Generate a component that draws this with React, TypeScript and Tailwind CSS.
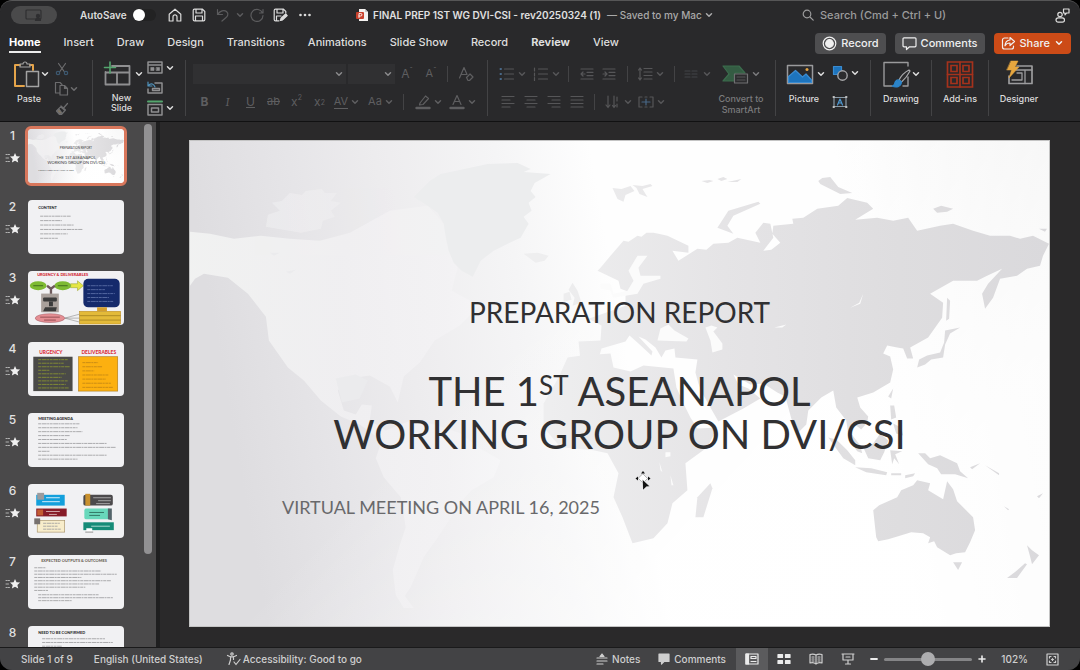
import { useState, type ReactNode } from "react";
import { clsx } from "clsx";

type IconProps = {
  w?: number;
  h?: number;
  className?: string;
  children: ReactNode;
};

const Icon = ({ w = 16, h = 16, className, children }: IconProps) => (
  <svg
    width={w}
    height={h}
    viewBox={`0 0 ${w} ${h}`}
    fill="none"
    stroke="currentColor"
    strokeWidth={1.2}
    strokeLinecap="round"
    strokeLinejoin="round"
    className={clsx("shrink-0", className)}
    aria-hidden="true"
  >
    {children}
  </svg>
);

const Chevron = ({ className }: { className?: string }) => (
  <Icon w={10} h={8} className={className}>
    <path d="M2.5 2.8 5 5.2l2.5-2.4" strokeWidth={1.5} />
  </Icon>
);

// Small icon button, width comes from className
const Tool = ({ label, className, children }: { label: string; className?: string; children: ReactNode }) => (
  <button type="button" aria-label={label} className={clsx("flex h-5 shrink-0 items-center justify-center", className)}>
    {children}
  </button>
);

const Separator = ({ className }: { className?: string }) => (
  <span className={clsx("h-4 w-px shrink-0 bg-[#434345]", className)} />
);

/* ---------- World map used as the slide background ---------- */

const WorldMap = ({ id }: { id: string }) => (
  <svg viewBox="0 0 860 486" preserveAspectRatio="none" className="absolute inset-0 h-full w-full" aria-hidden="true">
    <defs>
      <linearGradient id={`${id}-sea`} x1="0" y1="0.1" x2="1" y2="0">
        <stop offset="0" stopColor="#dedde0" />
        <stop offset="0.12" stopColor="#e6e5e8" />
        <stop offset="0.22" stopColor="#edecee" />
        <stop offset="0.36" stopColor="#f5f5f6" />
        <stop offset="0.47" stopColor="#fefefe" />
        <stop offset="0.75" stopColor="#fefefe" />
        <stop offset="1" stopColor="#f0f0f0" />
      </linearGradient>
      <linearGradient id={`${id}-west`} gradientUnits="userSpaceOnUse" x1="0" y1="0" x2="340" y2="0">
        <stop offset="0" stopColor="#f4f5f4" />
        <stop offset="0.45" stopColor="#f1f0f2" />
        <stop offset="0.75" stopColor="#f3f2f4" />
        <stop offset="1" stopColor="#f9f9fa" />
      </linearGradient>
      <linearGradient id={`${id}-east`} gradientUnits="userSpaceOnUse" x1="360" y1="0" x2="860" y2="0">
        <stop offset="0" stopColor="#eeeeef" />
        <stop offset="0.35" stopColor="#e5e4e6" />
        <stop offset="0.7" stopColor="#dedddf" />
        <stop offset="1" stopColor="#dad9dc" />
      </linearGradient>
      <linearGradient id={`${id}-glow`} gradientUnits="userSpaceOnUse" x1="420" y1="80" x2="860" y2="486">
        <stop offset="0" stopColor="#ffffff" stopOpacity="0" />
        <stop offset="0.7" stopColor="#ffffff" stopOpacity="0.8" />
      </linearGradient>
    </defs>
    <rect width="860" height="486" fill={`url(#${id}-sea)`} />
    <rect width="860" height="486" fill={`url(#${id}-glow)`} />

    {/* Americas */}
    <g fill={`url(#${id}-west)`} opacity="0.85">
      <path d="M0 91 20 93 44 98 71 95 100 98 130 100 160 92 200 70 238 65 254 83 259 110 268 127 262 150 290 165 270 185 245 200 230 222 214 236 208 262 200 246 180 235 160 238 148 250 154 270 166 274 172 264 182 265 180 280 196 290 221 280 245 284 271 293 290 308 311 320 304 337 282 350 271 362 251 393 234 417 221 447 215 456 224 468 214 468 206 455 203 430 210 405 216 387 211 357 194 337 186 318 192 300 170 284 151 276 131 260 114 240 98 227 79 200 76 176 58 153 38 137 14 133 5 138 0 145z" />
      <path d="m76 86 2-12 12-4-8-8 10-2 8-8 12 2 4-4 16-2 3 4 12 0-6 8 10 2-10 8 4 6-12 4-2 8-20 4z" opacity="0.6" />
    </g>
    <path
      d="M238 65 224 56 240 40 251 33 270 29 298 23 328 22 341 28 334 31 361 33 345 42 341 50 346 56 339 62 342 70 334 76 339 83 331 97 318 103 304 110 291 120 283 136 272 130 264 122 259 110 256 96 254 83 248 72z"
      fill="#ecedee"
    />

    {/* Europe and Asia */}
    <g fill={`url(#${id}-east)`}>
      <path d="m408 130 3-3 10-12 13-15 5 1 9-6 4 1 5-4 7 0 5 1 9 2 21 10v7l-16-2 6 10 19-12 9 1 7-6 15-1 9-5 23 5-5-10 8-10 7 1 3 14-10 13 8-1 9-7-8-9 1-8 20-2-1-5 11-1 14-9 21-3 9-8 20 5 6 6-18 11 22-2 16 3 15-3 9 13 23-5 13-2 20 7 17 5h20l10 3 13-3 16 8-6 12-3 10-13 3-10 7-17 3-7 19-8 11-3-15 6-10 14-15-15 7-10 5h-24l-23 13 13 9-1 15-14 20-18 10 3 11-6 0-4-10-6-1-10-2-4 8 7 3 3 13-3 13-17 10-16 5 3 10 8 9-1 6-6 7-9-7-2 10 10 13 2 8-5-2-8-11-3-20-10-13-3-17-12 7-13 13-2 14-8 8-7-14-6-22-8-4-14-9-13 1-17-10 5 10 10 4 12 10-17 10-25 13-8-14-9-16-3-8-3-11 2-13-22-2-1-9-9 2-4 7-6-10-10-8-7-3 14 15-1 4-13-12-9-8-4 6-24 7-3 10-18 3-2-20 22-1 1-15-13-7 20-7 17-6v-10l3-4-8-3-2-8z" />
      <path d="m383 142 5 8 4 12-9 3 2-8-6-8zM374 153l6-2 2 8-8 2zM334 113l14-1 11 3-4 5-9 2z" />
      <path d="m528 87 11-17 30-9 2 2-27 12-6 10 6 8zM423 47l9 1 9-3 4 5-9 4-2 7-6-3zM443 44l10 1 8-2 2 2-10 3 5 8-8-3-3-6zM512 40l8-1 4 1-6 2zM528 38l6-2 4 2-6 2zM538 41l14-3-4 3zM629 40l4-3 8-1 8 10 14 6-12 1-20-10zM744 68l8-3 12 3-6 3-10 1zM850 88l8 0-2 3z" />
      <path d="m728 227 2-8 8-4 13-3 4-10 1-12 15-3-10 6-5 11-2 13-12 2-6 5zM758 157l3 3-1 18-3 2zM704 248l-2 10-3-2z" />
      <path d="m701 265 4 0 2 12-5 2zM704 283l8 4 2 8-7-2zM639 297l8 2 11 11 8 10v5l-12-7zM666 327l16 1 16 4-1 3-20-3zM674 307l10-4 7-10 8 7-4 12-4 8-12-2zM701 310l12 1-7 3 4 10-5-6-2 6zM702 333l10 0 0 2-10 0zM716 335l10-2-2 3-8 2zM729 313l7 0 5 5 10-3 17 8 3 8 8 7-13-4-14 0-4-6-9-4zM781 327l10-4-8 6zM796 325l14 8 0 2zM815 366l5 3-1 1zM848 356l6-3-4 5z" />
      <path d="m684 370 6-5 18-8 4-7 12-5 4-5 13 3-2 7 15 9 4-18 6 8 4 12 16 16 2 13-5 12-5 10-9 1-6 2-13-8-3-6-6 2 2-6-7-4-12-1-13 4-10 3-10 2-2-4zM764 422l9 0-4 8zM838 405l5 5 7 5-7 9-2-8zM836 423l2 1-10 14-10 0 8-6z" />
    </g>

    {/* Africa */}
    <g fill={`url(#${id}-east)`}>
      <path d="m378 217 14-2 29-2 3 14 17 4 13-6 30 3 3 19 9 20 5 10 7 11 20-1-10 20-22 16 2 27-15 13-5 20-14 15-21 5-10-26-9-20 5-24-11-20-14-3-33-3-17-20v-24l15-26z" />
      <path d="m521 343 2 5-9 29-8 0 2-20z" />
    </g>

    {/* Inland seas and lakes */}
    <g fill="#fbfbfb">
      <path d="M411 143h10l3 10 14-3 6-10-5-10 9-15h10l-9 12 2 8h20v3l-17 5-6 10-24 4-3-7-10-2z" />
      <path d="m471 188 8-4 6 6 14 8-2 3-29-1zM516 187l6-2 6 2-4 4 9 12 0 6-10 3-2-12zM585 187l12-3-4 3zM476 312l5 0 0 4-5 1zM470 322l3 10-2-2zM481 335l3 10-2 0z" />
      <path d="m661 167 9-5 4-9-3 10z" />
    </g>
    <path d="M146 238l20-4 12 6-8 18-18 4zM80 112l10 0-6 3zM96 131l10-2-6 4z" fill="#ebebed" />
  </svg>
);

/* ---------- Slide thumbnails ---------- */

type RuledLinesProps = { x: number; y: number; step: number; widths: number[]; color?: string };

const RuledLines = ({ x, y, step, widths, color = "#98989a" }: RuledLinesProps) => (
  <g stroke={color} strokeWidth={0.8}>
    {widths.map((w, i) => (
      <path key={i} d={`M${x} ${y + i * step}h${w}`} strokeDasharray="3 0.6 5 0.5 2 0.6" />
    ))}
  </g>
);

const heading = "font-[Lato] font-black";

const thumbnails: { n: number; title: string; art: ReactNode }[] = [
  {
    n: 2,
    title: "Content",
    art: (
      <>
        <text x="10" y="9" fontSize="4" fill="#2e2e30" className={heading}>CONTENT</text>
        <RuledLines x={12} y={16.5} step={4.5} widths={[31, 22, 34, 43, 28, 18]} />
      </>
    ),
  },
  {
    n: 3,
    title: "Urgency & Deliverables",
    art: (
      <>
        <text x="9" y="5.5" fontSize="4" fill="#d2232f" className={heading}>URGENCY &amp; DELIVERABLES</text>
        <path d="M43 13h7v-3l6 5-6 5v-3h-7z" fill="#e5e645" stroke="#8c9a2c" strokeWidth=".5" />
        <ellipse cx="10" cy="15" rx="8.5" ry="4.5" fill="#7dba32" />
        <ellipse cx="35" cy="15" rx="8.5" ry="4.5" fill="#7dba32" />
        <path d="M19 15l4 3 4-3M23 18v6" stroke="#6e5a5c" strokeWidth="2.4" fill="none" />
        <rect x="13" y="23" width="18" height="19" fill="#a9a09b" />
        <rect x="15" y="27" width="14" height="4" rx="1" fill="#3b3b3b" />
        <path d="M17 37h12l-1 4H15zM21 31h4v5h-4z" fill="#3b3b3b" />
        <rect x="56" y="8" width="37" height="29" rx="5" fill="#152a6b" />
        <RuledLines x={60} y={15} step={4} widths={[26, 18, 28, 22, 27]} color="#6476ad" />
        <path d="M70 37h10v4H70z" fill="#d59f2c" />
        <rect x="52" y="41" width="42" height="13" fill="#e3ba39" stroke="#b78622" strokeWidth=".5" />
        <path d="M52 45.5h42M52 50h42" stroke="#97761d" strokeWidth=".7" />
        <path d="m37 48 15-4M37 48h15M37 48l15 4" stroke="#777" strokeWidth=".5" />
        <ellipse cx="22" cy="48" rx="15" ry="4.5" fill="#e58e93" stroke="#9c5960" strokeWidth=".5" />
        <path d="M12 47h20M16 50h12" stroke="#7f3f45" strokeWidth=".8" />
        <path d="M5 15h10M30 15h10" stroke="#33591a" strokeWidth=".8" />
      </>
    ),
  },
  {
    n: 4,
    title: "Urgency and Deliverables",
    art: (
      <>
        <text x="11" y="12" fontSize="5" fill="#dc2f3b" className={heading}>URGENCY</text>
        <text x="54" y="12" fontSize="5" fill="#dc2f3b" className={heading}>DELIVERABLES</text>
        <rect x="5" y="15" width="40" height="35" fill="#4a4a48" />
        <RuledLines x={10} y={18} step={3.6} widths={[30, 26, 32, 12, 28, 24, 30, 28, 31]} color="#8f9a30" />
        <rect x="51" y="15" width="40" height="35" fill="#fcb010" stroke="#a8781c" strokeWidth=".6" />
        <RuledLines x={55} y={21} step={4.2} widths={[16, 20, 12, 27, 24, 29, 31]} color="#bf8516" />
      </>
    ),
  },
  {
    n: 5,
    title: "Meeting Agenda",
    art: (
      <>
        <text x="10" y="7.5" fontSize="4" fill="#2e2e30" className={heading}>MEETING AGENDA</text>
        <RuledLines x={10} y={11} step={4} widths={[42, 40, 45, 32, 29, 70, 79, 12, 70, 40]} />
      </>
    ),
  },
  {
    n: 6,
    title: "Overview",
    art: (
      <>
        <rect x="8" y="11" width="29" height="11" fill="#14a0dc" />
        <rect x="9" y="9" width="7" height="7" fill="#9b9b9d" />
        <path d="M18 14h14M14 18h18" stroke="#d5eefa" />
        <rect x="8" y="25" width="31" height="8" fill="#871c28" />
        <rect x="9" y="26" width="6" height="6" fill="#c25b31" />
        <path d="M18 28h14M21 31h8" stroke="#dab5b8" strokeWidth=".9" />
        <rect x="9" y="37" width="28" height="12" fill="#f8edcb" stroke="#a08a60" strokeWidth=".6" />
        <rect x="6" y="35" width="6" height="6" fill="#77716e" />
        <RuledLines x={15} y={40} step={3} widths={[17, 15, 18]} />
        <rect x="56" y="11" width="30" height="11" rx="2" fill="#4c4a4c" />
        <rect x="58" y="10" width="5" height="12" fill="#c9912e" />
        <path d="M66 14h18M71 17h13M69 20h14" stroke="#bbb" strokeWidth=".8" />
        <rect x="57" y="25" width="27" height="11" rx="2" fill="#68d8bb" />
        <path d="M62 29h15M62 32h11" stroke="#2c6c5c" strokeWidth=".9" />
        <path d="M81 25h4v12l-4-1z" fill="#53646a" />
        <rect x="56" y="39" width="31" height="8" fill="#158b77" />
        <path d="M64 43h19" stroke="#b9e2da" strokeWidth=".9" />
        <path d="M59 45h6v5h-6z" fill="#fff" />
        <path d="M58 49h8" stroke="#898989" />
      </>
    ),
  },
  {
    n: 7,
    title: "Expected Outputs & Outcomes",
    art: (
      <>
        <text x="13" y="7" fontSize="4" fill="#6a6255" className={heading}>EXPECTED OUTPUTS &amp; OUTCOMES</text>
        <RuledLines x={6} y={13} step={3.3} widths={[12, 68, 84, 48, 78, 66, 52, 14]} />
        <RuledLines x={10} y={40.5} step={3} widths={[62, 76, 34]} />
      </>
    ),
  },
  {
    n: 8,
    title: "Need to be Confirmed",
    art: (
      <>
        <text x="10" y="8" fontSize="4" fill="#2e2e30" className={heading}>NEED TO BE CONFIRMED</text>
        <RuledLines x={14} y={13} step={3.8} widths={[64, 72, 20, 68]} />
      </>
    ),
  },
];

const Star = () => (
  <Icon w={16} h={12} className="text-[#f0f0f0]">
    <path d="M1 2.5h1M3 2.5h1.5M1 6h2.5M1 9.5h1M3 9.5h1.5" strokeWidth={0.9} opacity={0.7} />
    <path d="m10 1 1.5 3.3 3.6.3-2.7 2.4.8 3.6L10 8.7l-3.1 1.9.8-3.6L5 4.6l3.6-.3z" fill="currentColor" stroke="none" />
  </Icon>
);

type ThumbProps = { n: number; title: string; active?: boolean; onSelect: () => void; children: ReactNode };

const Thumb = ({ n, title, active, onSelect, children }: ThumbProps) => (
  <li className="flex h-[71px] shrink-0 items-start">
    <div className="flex w-[25px] shrink-0 flex-col items-center gap-2 pt-0.5 text-[12px] leading-4 font-medium text-[#e2e2e2]">
      <span>{n}</span>
      <Star />
    </div>
    <button
      type="button"
      aria-label={`Slide ${n}: ${title}`}
      onClick={onSelect}
      className={clsx("rounded-md border-2 p-px", active ? "border-[#d8775c] bg-[#d8775c]" : "border-transparent")}
    >
      <span className="relative block h-[54px] w-[96px] overflow-hidden rounded-sm bg-[#f1f1f3]">{children}</span>
    </button>
  </li>
);

const SlideList = ({ current, onSelect }: { current: number; onSelect: (n: number) => void }) => (
  <aside className="flex w-[156px] shrink-0 overflow-hidden bg-[#4a494a]">
    <ol className="flex flex-1 flex-col pt-1">
      <Thumb n={1} title="Preparation Report" active={current === 1} onSelect={() => onSelect(1)}>
        <WorldMap id="thumb" />
        <svg viewBox="0 0 96 54" className="absolute inset-0" textAnchor="middle" fill="#3b3b3d" aria-hidden="true">
          <text x="48" y="20" fontSize="3" className="font-[Lato]">PREPARATION REPORT</text>
          <text x="48" y="30" fontSize="4" className="font-[Lato]">THE 1ST ASEANAPOL</text>
          <text x="48" y="35" fontSize="4" className="font-[Lato]">WORKING GROUP ON DVI/CSI</text>
          <text x="28" y="42" fontSize="2" className="font-[Lato]">VIRTUAL MEETING ON APRIL 16, 2025</text>
        </svg>
      </Thumb>
      {thumbnails.map((t) => (
        <Thumb key={t.n} n={t.n} title={t.title} active={current === t.n} onSelect={() => onSelect(t.n)}>
          <svg viewBox="0 0 97 55" className="block h-full w-full" aria-hidden="true">
            {t.art}
          </svg>
        </Thumb>
      ))}
    </ol>
    <div className="w-3 shrink-0 pt-0.5">
      <div className="h-[430px] w-2 rounded-full bg-[#929193]" />
    </div>
  </aside>
);

/* ---------- Title bar and tabs ---------- */

const TitleBar = () => (
  <header className="flex h-[28px] shrink-0 items-center text-[11px] text-[#dcdcdc]">
    <div className="flex w-[356px] shrink-0 items-center">
      <div className="ml-[11px] flex h-[18px] w-[46px] items-center justify-center rounded-full bg-[#4a4a4b] text-[#2f2f31]">
        <Icon w={18} h={12}>
          <rect x="1" y="1" width="15" height="9" rx="1" />
          <circle cx="13" cy="7" r="1.6" fill="currentColor" />
          <path d="M10.5 11.5c0-3 5-3 5 0z" fill="currentColor" />
        </Icon>
      </div>
      <label className="ml-[23px] flex items-center gap-1.5 text-[10px] font-semibold">
        AutoSave
        <input
          type="checkbox"
          role="switch"
          className="h-3 w-[23px] appearance-none rounded-full bg-[#222223] before:block before:h-3 before:w-3 before:rounded-full before:bg-white checked:before:ml-auto"
        />
      </label>
      <div className="ml-[7px] flex items-center">
        <Tool label="Home" className="w-6">
          <Icon w={14} h={14}>
            <path d="M1.2 6.2 7 1.2l5.8 5V13H9V8.8a2 2 0 0 0-4 0V13H1.2z" />
          </Icon>
        </Tool>
        <Tool label="Save" className="w-6">
          <Icon w={14} h={14}>
            <path d="M1.2 2.5c0-.8.5-1.3 1.3-1.3h8l2.3 2.3v8c0 .8-.5 1.3-1.3 1.3h-9c-.8 0-1.3-.5-1.3-1.3zM4 1.5V5h6V1.5M3.5 12.5V8h7v4.5" />
          </Icon>
        </Tool>
        <Tool label="Undo" className="w-6 text-[#5b5b5d]">
          <Icon w={14} h={14}>
            <path d="M1.5 1.5v5h5M1.8 6.2C4 3 8 1.5 10.5 3.5c2.7 2.4 1 5-1 6.5L6 13" />
          </Icon>
        </Tool>
        <Chevron className="text-[#5b5b5d]" />
        <Tool label="Redo" className="w-6 text-[#5b5b5d]">
          <Icon w={14} h={14}>
            <path d="M12.5 5A6 6 0 1 0 13 7.5M13 1.5V5H9.5" />
          </Icon>
        </Tool>
        <Tool label="Save as" className="w-6">
          <Icon w={15} h={14}>
            <path d="M6 12.8H2.5c-.8 0-1.3-.5-1.3-1.3v-9c0-.8.5-1.3 1.3-1.3h8l2.3 2.3V5M4 1.5V5h6V1.5M3.5 12.5V8H8" />
            <path d="m7.5 12.5.6-2.2 4.6-4.3 1.5 1.6-4.6 4.3z" fill="currentColor" />
          </Icon>
        </Tool>
        <Tool label="More" className="w-6">
          <Icon w={14} h={4}>
            <g fill="currentColor" stroke="none">
              <circle cx="2.5" cy="2" r="1.3" />
              <circle cx="7" cy="2" r="1.3" />
              <circle cx="11.5" cy="2" r="1.3" />
            </g>
          </Icon>
        </Tool>
      </div>
    </div>
    <button type="button" className="flex w-[446px] shrink-0 items-center text-left text-[10px] text-[#a9a9aa]">
      <Icon w={13} h={14} className="mr-1">
        <path d="M3 1h6l3 3v9H3z" fill="#f3f1f0" stroke="none" />
        <path d="M9 1v3h3z" fill="#c9c5c4" stroke="none" />
        <rect x="0" y="4" width="8" height="7" rx="1" fill="#c8402c" stroke="none" />
        <path d="M3 9.5v-4h1.7a1.2 1.2 0 0 1 0 2.5H3" stroke="#fff" strokeWidth=".9" />
      </Icon>
      <span className="font-semibold text-[#e0e0e0]">FINAL PREP 1ST WG DVI-CSI - rev20250324 (1)</span>
      <span className="ml-1.5 font-medium">— Saved to my Mac</span>
      <Chevron className="ml-0.5" />
    </button>
    <label className="flex min-w-0 flex-1 items-center gap-1.5 text-[#9b9b9c]">
      <Icon w={12} h={12}>
        <circle cx="5" cy="5" r="3.8" />
        <path d="m8 8 3.2 3.2" />
      </Icon>
      <input
        type="search"
        aria-label="Search"
        placeholder="Search (Cmd + Ctrl + U)"
        className="min-w-0 flex-1 bg-transparent text-[11px] font-medium outline-none placeholder:text-[#9b9b9c]"
      />
    </label>
    <Tool label="Presence" className="mr-2.5 w-4">
      <Icon w={15} h={15}>
        <circle cx="5" cy="6.5" r="2.2" />
        <rect x="1" y="9.8" width="8.5" height="4.4" rx="2.2" />
        <path d="M8.5 1H14v4h-2.5L10 6.8V5H8.5z" />
      </Icon>
    </Tool>
  </header>
);

const tabs = ["Home", "Insert", "Draw", "Design", "Transitions", "Animations", "Slide Show", "Record", "Review", "View"];

const TabRow = ({ tab, onSelect }: { tab: string; onSelect: (name: string) => void }) => (
  <div className="flex h-[28px] shrink-0 items-center px-[9px]">
    <nav className="flex flex-1 items-center gap-[23px] text-[11px] font-medium text-[#dedede]">
      {tabs.map((name) => (
        <button
          key={name}
          type="button"
          onClick={() => onSelect(name)}
          className={clsx(
            "border-b-2 pt-px pb-px leading-4 whitespace-nowrap",
            name === tab ? "border-[#ececec] font-bold text-white" : "border-transparent",
            name === "Review" && "font-bold"
          )}
        >
          {name}
        </button>
      ))}
    </nav>
    <div className="flex items-center gap-[9px] text-[11px] font-medium text-[#f0f0f0]">
      <button type="button" className="flex h-[21px] items-center gap-1 rounded bg-[#4e4e50] px-[7px]">
        <Icon w={15} h={15}>
          <circle cx="7.5" cy="7.5" r="6.3" />
          <circle cx="7.5" cy="7.5" r="3.8" fill="currentColor" />
        </Icon>
        Record
      </button>
      <button type="button" className="flex h-[21px] items-center gap-1 rounded bg-[#4e4e50] px-[7px]">
        <Icon w={15} h={15}>
          <path d="M2 1.8h11c.5 0 1 .4 1 1v7c0 .6-.5 1-1 1H7.5l-3 2.7v-2.7H2c-.5 0-1-.4-1-1v-7c0-.6.5-1 1-1z" />
        </Icon>
        Comments
      </button>
      <button type="button" className="flex h-[21px] items-center gap-1 rounded bg-[#cc4b17] px-[7px]">
        <Icon w={15} h={15}>
          <path d="M7 2H3.5c-1 0-2 1-2 2v7c0 1 1 2 2 2h7c1 0 2-1 2-2v-1M9 1.5l4.5 4-4.5 4V7C6.5 7 5 8 4 9.8 4.2 6.5 6 4.2 9 4z" />
        </Icon>
        Share
        <Chevron />
      </button>
    </div>
  </div>
);

/* ---------- Ribbon ---------- */

const Group = ({ className, last, children }: { className: string; last?: boolean; children: ReactNode }) => (
  <section className={clsx("flex h-[56px] shrink-0", !last && "border-r border-[#434345]", className)}>{children}</section>
);

const BigLabel = ({ className, children }: { className?: string; children: ReactNode }) => (
  <span className={clsx("block text-center text-[9px] leading-[11px] font-medium", className)}>{children}</span>
);

const AlignIcon = ({ rows }: { rows: [number, number][] }) => (
  <Icon w={14} h={14}>
    {rows.map(([x, w], i) => (
      <path key={i} d={`M${x} ${1.5 + i * 3.5}h${w}`} />
    ))}
  </Icon>
);

const ClipboardGroup = () => (
  <Group className="w-[93px] pl-3">
    <button type="button" className="flex flex-col items-center gap-1">
      <span className="flex items-center">
        <Icon w={28} h={29}>
          <path d="M8 5H3v21h9M18 5h3v5" stroke="#e5a44a" strokeWidth={2} />
          <path d="M8 7V4h3a2 2 0 0 1 4 0h3v3z" stroke="#a3a3a3" />
          <path d="M14.5 11.5h12v15h-12z" fill="#2c2c2e" stroke="#a3a3a3" strokeWidth={1.5} />
        </Icon>
        <Chevron className="text-[#dcdcdc]" />
      </span>
      <BigLabel className="mr-1">Paste</BigLabel>
    </button>
    <div className="-mt-px ml-1 flex flex-col text-[#6c6c6e]">
      <Tool label="Cut" className="w-4">
        <Icon w={14} h={14}>
          <path d="m3.5 1.5 6 8.5M10.5 1.5l-6 8.5" />
          <circle cx="3" cy="11" r="1.7" stroke="#3c5870" />
          <circle cx="11" cy="11" r="1.7" stroke="#3c5870" />
        </Icon>
      </Tool>
      <Tool label="Copy" className="w-6">
        <Icon w={15} h={15}>
          <path d="M6 12H1.5V1.5H6l2 2M6 4.5h4.5l3 3V14H6zM10.5 4.5v3h3" />
        </Icon>
        <Chevron />
      </Tool>
      <Tool label="Format painter" className="w-4">
        <Icon w={14} h={14}>
          <path d="M12.5 1.5 9 5.5M6 4l4.5 4M5.5 4.8 1.5 9l3 3.5h2L10 8.5z" />
          <path d="m4 7-2 2 3 3 2-1z" fill="#7f7462" />
        </Icon>
      </Tool>
    </div>
  </Group>
);

const SlidesGroup = () => (
  <Group className="w-[93px] pl-2.5 text-[#8f8f91]">
    <button type="button" className="flex w-[40px] flex-col gap-1">
      <span className="flex items-center">
        <Icon w={29} h={29}>
          <path d="M9 6h17.5v18.5h-24V12M3 12.5h23M14 12.5v12" strokeWidth={1.8} />
          <path d="M7 2v11M1.5 7.5h11" stroke="#54a66e" strokeWidth={1.6} />
        </Icon>
        <Chevron className="ml-0.5 text-[#dcdcdc]" />
      </span>
      <span className="w-[37px] text-center text-[9px] leading-[10px] font-medium text-[#dcdcdc]">New Slide</span>
    </button>
    <div className="-mt-0.5 ml-1 flex flex-col">
      <Tool label="Layout" className="gap-0.5">
        <Icon w={16} h={13}>
          <path d="M1 1h14v11H1zM1 4h14" strokeWidth={1.5} />
          <path d="M4 6.5h3v3H4zM9.5 6.5h3v3h-3z" fill="currentColor" strokeWidth={0.6} />
        </Icon>
        <Chevron className="text-[#dcdcdc]" />
      </Tool>
      <Tool label="Reset" className="w-4">
        <Icon w={16} h={13}>
          <path d="M8 2h7v10H1V8" strokeWidth={1.5} />
          <path d="M5.5 7.5h7v2h-7z" strokeWidth={1.4} />
          <path d="M1 1v4h4M1.5 4.5C4 1.5 7 3 8 6" stroke="#5093bd" />
        </Icon>
      </Tool>
      <Tool label="Section" className="gap-0.5">
        <Icon w={16} h={16}>
          <path d="M1 1.5h14" stroke="#54a66e" strokeWidth={2} />
          <path d="M1 4.5h14V15H1zM4.5 8h7v4h-7z" strokeWidth={1.5} />
        </Icon>
        <Chevron className="text-[#dcdcdc]" />
      </Tool>
    </div>
  </Group>
);

const FontGroup = () => (
  <Group className="w-[302px] flex-col justify-between pt-1 pb-1 pl-[7px] text-[12px] text-[#5e5e60]">
    <div className="flex items-center">
      <select aria-label="Font" className="h-5 w-[153px] appearance-none bg-[#303032] outline-none" />
      <Chevron className="-ml-3 text-[#8a8a8c]" />
      <select aria-label="Font size" className="ml-1 h-5 w-[47px] appearance-none bg-[#303032] outline-none" />
      <Chevron className="-ml-3 text-[#8a8a8c]" />
      <Tool label="Increase font size" className="ml-1 w-5">
        A<sup className="text-[8px]">ˆ</sup>
      </Tool>
      <Tool label="Decrease font size" className="ml-1 w-5 text-[11px]">
        A<sup className="text-[8px]">ˇ</sup>
      </Tool>
      <Separator className="ml-1.5" />
      <Tool label="Clear formatting" className="ml-2 w-5">
        <Icon w={16} h={16}>
          <path d="M1.5 12 6 1.5l3 7M3.2 8.5h5M8.5 11.5 12 8l3 3-3.5 3.5H10z" />
        </Icon>
      </Tool>
    </div>
    <div className="flex items-center">
      <Tool label="Bold" className="w-[23px] font-bold">B</Tool>
      <Tool label="Italic" className="w-[23px] font-serif italic">I</Tool>
      <Tool label="Underline" className="w-[23px] underline">U</Tool>
      <Tool label="Strikethrough" className="w-[23px] text-[11px] line-through">ab</Tool>
      <Tool label="Superscript" className="w-[23px]">x<sup className="text-[7px]">2</sup></Tool>
      <Tool label="Subscript" className="w-[23px]">x<sub className="text-[7px]">2</sub></Tool>
      <Tool label="Character spacing" className="w-[32px]">
        <span className="border-b border-current text-[11px] leading-[13px]">AV</span>
        <Chevron className="ml-0.5" />
      </Tool>
      <Tool label="Change case" className="ml-0.5 w-[32px] text-[11px]">
        Aa
        <Chevron className="ml-0.5" />
      </Tool>
      <Separator className="ml-1.5" />
      <Tool label="Highlight" className="ml-2.5 w-[30px]">
        <Icon w={16} h={16}>
          <path d="m5 9 5.5-7 3 2.5-5.5 6-3.5.5z" />
          <path d="M1.5 14h13" strokeWidth={2.4} />
        </Icon>
        <Chevron className="ml-0.5" />
      </Tool>
      <Tool label="Font color" className="ml-1 w-[30px]">
        <Icon w={16} h={16}>
          <path d="m4 10.5 4-9 4 9M5.3 7.5h5.4" />
          <path d="M1.5 14h13" strokeWidth={2.4} />
        </Icon>
        <Chevron className="ml-0.5" />
      </Tool>
    </div>
  </Group>
);

const ParagraphGroup = () => (
  <Group className="w-[288px] pl-2 text-[#565658]">
    <div className="flex w-[211px] flex-col justify-between pt-1 pb-1">
      <div className="flex items-center">
        <Tool label="Bullets" className="w-[34px]">
          <Icon w={16} h={14}>
            <path d="M5.5 2h9M5.5 7h9M5.5 12h9" />
            <path d="M1.5 2H2M1.5 7H2M1.5 12H2" stroke="#4a6a8a" strokeWidth={2} />
          </Icon>
          <Chevron className="ml-0.5" />
        </Tool>
        <Tool label="Numbering" className="w-[34px]">
          <Icon w={16} h={14}>
            <path d="M5.5 2h9M5.5 7h9M5.5 12h9M1.5 1v3M1.5 6v3M1.5 10.5v3" />
          </Icon>
          <Chevron className="ml-0.5" />
        </Tool>
        <Separator className="ml-1" />
        <Tool label="Decrease indent" className="ml-2 w-5">
          <Icon w={14} h={12}>
            <path d="M1 1h12M7 4.3h6M7 7.6h6M1 11h12M5 6H1M3 4 1 6l2 2" />
          </Icon>
        </Tool>
        <Tool label="Increase indent" className="ml-0.5 w-5">
          <Icon w={14} h={12}>
            <path d="M1 1h12M7 4.3h6M7 7.6h6M1 11h12M1 6h4M3 4l2 2-2 2" />
          </Icon>
        </Tool>
        <Separator className="ml-2" />
        <Tool label="Line spacing" className="ml-2 w-[30px]">
          <Icon w={16} h={14}>
            <path d="M7 1.5h8M7 5h8M7 8.5h8M7 12h8M3 1v12M1.5 3 3 1l1.5 2M1.5 11 3 13l1.5-2" />
          </Icon>
          <Chevron className="ml-0.5" />
        </Tool>
        <Separator className="ml-2" />
        <Tool label="Columns" className="ml-2 w-[30px] text-[#424548]">
          <Icon w={14} h={10}>
            <path d="M1 2h5M1 5h5M1 8h5M8 2h5M8 5h5M8 8h5" />
          </Icon>
          <Chevron className="ml-1 text-[#565658]" />
        </Tool>
      </div>
      <div className="flex items-center">
        <Tool label="Align left" className="w-[23px]">
          <AlignIcon rows={[[1, 12], [1, 8], [1, 12], [1, 8]]} />
        </Tool>
        <Tool label="Center" className="w-[23px]">
          <AlignIcon rows={[[1, 12], [3, 8], [1, 12], [3, 8]]} />
        </Tool>
        <Tool label="Align right" className="w-[23px]">
          <AlignIcon rows={[[1, 12], [5, 8], [1, 12], [5, 8]]} />
        </Tool>
        <Tool label="Justify" className="w-[23px]">
          <AlignIcon rows={[[1, 12], [1, 12], [1, 12], [1, 12]]} />
        </Tool>
        <Separator className="ml-1.5" />
        <Tool label="Text direction" className="ml-2.5 w-[28px]">
          <Icon w={14} h={14}>
            <path d="M3 1v11M1 10l2 2.5L5 10M9 1v11M12 2v4M12 9v3M7.5 10.5l1.5 2 1.5-2" />
          </Icon>
          <Chevron className="ml-1" />
        </Tool>
        <Tool label="Align text" className="ml-1 w-[30px]">
          <Icon w={16} h={12}>
            <path d="M4 1H1v10h3M12 1h3v10h-3M7 1h2M7 11h2" />
            <path d="M4 6h8M8 3v6" stroke="#486785" />
          </Icon>
          <Chevron className="ml-0.5" />
        </Tool>
      </div>
    </div>
    <button type="button" className="flex flex-1 flex-col items-center gap-1 text-[#7b7b7d]">
      <span className="flex items-center">
        <Icon w={28} h={29}>
          <path d="M2 6h16l6 7H14v8H2l6-7z" fill="#345c43" stroke="#3b6c4d" />
          <path d="M13.5 14h13v9h-13z" fill="#2c2c2e" stroke="#707072" />
          <path d="M16 17h8M16 20h8" stroke="#555557" />
        </Icon>
        <Chevron className="ml-0.5" />
      </span>
      <BigLabel>
        Convert to
        <br />
        SmartArt
      </BigLabel>
    </button>
  </Group>
);

const InsertGroup = () => (
  <Group className="w-[95px] pl-2.5">
    <button type="button" className="flex flex-col items-center gap-1">
      <span className="flex items-center">
        <Icon w={28} h={29}>
          <path d="M1.5 5.5h25v18h-25z" stroke="#9a9a9c" strokeWidth={1.5} />
          <path d="M2.5 22.5v-6l7-6 7 6.5 3.5-3 5.500 6v2.500z" fill="#1d74bd" stroke="#3a8bd0" />
          <circle cx="21" cy="9.5" r="1.5" fill="#e3a443" stroke="none" />
        </Icon>
        <Chevron className="ml-0.5" />
      </span>
      <BigLabel className="mr-1">Picture</BigLabel>
    </button>
    <div className="ml-1.5 flex flex-col justify-between pt-[3px] pb-1">
      <Tool label="Shapes">
        <Icon w={16} h={16}>
          <path d="M1.5 1.5h8v8h-8z" fill="#1d74bd" stroke="#3a8bd0" />
          <circle cx="10.5" cy="10.5" r="4.7" fill="#2c2c2e" stroke="#a4a4a6" strokeWidth={1.4} />
        </Icon>
        <Chevron className="ml-0.5" />
      </Tool>
      <Tool label="Text box" className="w-4">
        <Icon w={16} h={14}>
          <path d="M2 2.5h12v9H2z" stroke="#8a9aa6" />
          <path d="M1.5 2H2M14 2h.5M1.5 12H2M14 12h.5" stroke="#c0c0c0" strokeWidth={2} />
          <path d="m5.5 10 2.5-6 2.5 6M6.5 8h3" stroke="#4c98d2" />
        </Icon>
      </Tool>
    </div>
  </Group>
);

const Ribbon = () => (
  <div className="flex h-[65px] shrink-0 items-center overflow-hidden border-b border-[#111112] pb-[3px] text-[#dcdcdc]">
    <ClipboardGroup />
    <SlidesGroup />
    <FontGroup />
    <ParagraphGroup />
    <InsertGroup />
    <Group className="w-[61px] justify-center">
      <button type="button" className="flex flex-col items-center gap-1">
        <span className="flex items-center">
          <Icon w={29} h={29}>
            <path d="M26 6V2.5H2V26h8M26 17v9h-5" stroke="#9a9a9c" strokeWidth={1.4} />
            <path d="M27 10c-4 2-8 6-10 10l2.5 2C23 19 26 15 28 11z" fill="#2c2c2e" stroke="#a9a9ab" />
            <path d="M17 20c-3-.5-4 2-4.5 4-.5 1.5-1.5 2-2.5 2 4 2 9 1 9.5-4z" fill="#2b84c9" stroke="#2b84c9" />
          </Icon>
          <Chevron />
        </span>
        <BigLabel>Drawing</BigLabel>
      </button>
    </Group>
    <Group className="w-[57px] justify-center">
      <button type="button" className="flex flex-col items-center gap-1">
        <Icon w={28} h={29}>
          <g stroke="#a5321c" strokeWidth={1.7} strokeLinejoin="miter">
            <path d="M1.5 2h25v25h-25z" />
            <path d="M5 5.5h6v6H5zM17 5.5h6v6h-6zM5 17.5h6v6H5zM17 17.5h6v6h-6zM14 2v25M1.5 14.5h25" />
          </g>
        </Icon>
        <BigLabel>Add-ins</BigLabel>
      </button>
    </Group>
    <Group className="w-[60px] justify-center" last>
      <button type="button" className="flex flex-col items-center gap-1">
        <Icon w={29} h={29}>
          <path d="M12 6h15v17.5H4V16" stroke="#9c9c9e" strokeWidth={1.7} />
          <path d="M11 10h16M20 10v13.5M7 20h10v-7h-5" stroke="#9c9c9e" strokeWidth={1.3} />
          <path d="M6 1h7l-3 6h4L4 18l2.5-8H2z" fill="#e6a63f" stroke="#e6a63f" strokeWidth={0.5} />
        </Icon>
        <BigLabel>Designer</BigLabel>
      </button>
    </Group>
  </div>
);

/* ---------- Slide canvas ---------- */

const MoveCursor = () => (
  <Icon w={18} h={22} className="absolute top-[329px] left-[444px]">
    <path d="m9 4 4.5 4.5L9 13 4.5 8.5z" fill="#fff" stroke="#777" strokeWidth={0.5} />
    <g fill="#111" stroke="none">
      <path d="m9 1 2 2.5H7zM1.5 8.5l2.5-2v4zM16.5 8.5l-2.5-2v4z" />
      <path d="m8.5 9.5 7.5 7-3.5.2L9 20z" stroke="#fff" strokeWidth={0.5} />
    </g>
  </Icon>
);

const Canvas = () => (
  <main className="flex min-w-0 flex-1 border-l-4 border-[#1f1f20] bg-[#2a292a] pt-[18px] pr-[30px] pb-[20px] pl-[29px]">
    <article className="relative flex flex-1 flex-col border border-[#c4c4c4] bg-white text-center font-[Lato,sans-serif] text-[#303032]">
      <WorldMap id="slide" />
      <h2 className="relative mt-[153px] text-[28px] leading-9">PREPARATION REPORT</h2>
      <h1 className="relative mt-[40px] text-[40px] leading-[43px]">
        THE 1<sup className="top-[-11px] text-[26px] leading-none">ST</sup> ASEANAPOL
        <br />
        WORKING GROUP ON DVI/CSI
      </h1>
      <p className="relative mt-[39px] pl-[92px] text-left text-[18px] leading-6 text-[#69696b]">
        VIRTUAL MEETING ON APRIL 16, 2025
      </p>
      <MoveCursor />
    </article>
  </main>
);

/* ---------- Status bar ---------- */

const StatusBar = ({ current }: { current: number }) => {
  const [zoom, setZoom] = useState(102);

  return (
    <footer className="flex h-[23px] shrink-0 items-center border-t border-[#1a1a1b] bg-[#434345] pr-5 pl-[21px] text-[10px] font-medium text-[#cfcfcf]">
      <span>Slide {current} of 9</span>
      <button type="button" className="ml-[21px]">English (United States)</button>
      <button type="button" className="ml-[23px] flex items-center gap-0.5">
        <Icon w={15} h={14}>
          <circle cx="6" cy="2" r="1.2" />
          <path d="M1.5 3.5C4 5 8 5 10.5 3.5M4.5 5v3L3 12.5M7.5 5v2.5M8 10l2 2.5 4-5" />
        </Icon>
        Accessibility: Good to go
      </button>
      <div className="ml-auto flex h-full items-center">
        <button type="button" className="flex items-center gap-1">
          <Icon w={12} h={12}>
            <path d="M1 5h10M1 8h10M1 11h6" />
            <path d="m6 1 2 2.5H4z" fill="currentColor" />
          </Icon>
          Notes
        </button>
        <button type="button" className="ml-[18px] flex items-center gap-1">
          <Icon w={12} h={12}>
            <path d="M1 1h10v7.5H6L3.5 11V8.5H1z" fill="currentColor" />
          </Icon>
          Comments
        </button>
        <Tool label="Normal view" className="ml-2.5 h-full w-8 bg-[#5b5b5d] text-[#ececec]">
          <Icon w={14} h={12}>
            <path d="M1 1h12v10H1z" />
            <path d="M1 1h2.5v10H1z" fill="currentColor" />
            <path d="M6 3.5h5v2H6zM6 8.5h5" />
          </Icon>
        </Tool>
        <Tool label="Slide sorter" className="w-8 text-[#ececec]">
          <Icon w={14} h={12}>
            <path d="M1 1.5h4.5v3H1zM8.5 1.5H13v3H8.5zM1 7.5h4.5v3H1zM8.5 7.5H13v3H8.5z" fill="currentColor" />
          </Icon>
        </Tool>
        <Tool label="Reading view" className="w-8">
          <Icon w={14} h={12}>
            <path d="M7 2v9M7 2C5 .8 3 .8 1 1.5V10c2-.7 4-.7 6 1 2-1.7 4-1.7 6-1V1.5C11 .8 9 .8 7 2zM3 4h2M3 6h2M3 8h2M9 4h2M9 6h2M9 8h2" />
          </Icon>
        </Tool>
        <Tool label="Slide show" className="w-8">
          <Icon w={14} h={12}>
            <path d="M1 1h12M2 1v6h10V1M7 7v4M4.5 11h5M5 4h4" />
          </Icon>
        </Tool>
        <Tool label="Zoom out" className="w-5 text-[#ececec]">
          <Icon w={8} h={8}>
            <path d="M1 4h6" strokeWidth={1.8} />
          </Icon>
        </Tool>
        <input
          type="range"
          aria-label="Zoom"
          min={4}
          max={200}
          value={zoom}
          onChange={(e) => setZoom(Number(e.target.value))}
          className="h-[3px] w-[88px] appearance-none rounded-full bg-[#858587] [&::-webkit-slider-thumb]:h-3.5 [&::-webkit-slider-thumb]:w-3.5 [&::-webkit-slider-thumb]:appearance-none [&::-webkit-slider-thumb]:rounded-full [&::-webkit-slider-thumb]:bg-[#adadaf]"
        />
        <Tool label="Zoom in" className="w-5 text-[#ececec]">
          <Icon w={8} h={8}>
            <path d="M1 4h6M4 1v6" strokeWidth={1.6} />
          </Icon>
        </Tool>
        <span className="ml-1.5 w-[30px] text-right">{zoom}%</span>
        <Tool label="Fit to window" className="ml-4 w-4">
          <Icon w={13} h={13}>
            <path d="M1 1h11v11H1zM3.5 5V3.5H5M8 3.5h1.5V5M9.5 8v1.5H8M5 9.5H3.5V8M5.5 6.5h2M6.5 5.5v2" />
          </Icon>
        </Tool>
      </div>
    </footer>
  );
};

export default function App() {
  const [tab, setTab] = useState("Home");
  const [current, setCurrent] = useState(1);

  return (
    <div className="h-screen bg-black font-[Inter,sans-serif]">
      <div className="flex h-full flex-col overflow-hidden rounded-xl border-t border-[#565657] bg-[#29292b]">
        <TitleBar />
        <TabRow tab={tab} onSelect={setTab} />
        <Ribbon />
        <div className="flex min-h-0 flex-1">
          <SlideList current={current} onSelect={setCurrent} />
          <Canvas />
        </div>
        <StatusBar current={current} />
      </div>
    </div>
  );
}
